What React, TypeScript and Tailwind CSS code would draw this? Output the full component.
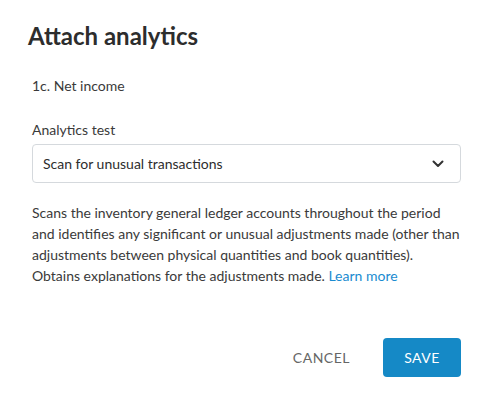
import React from "react";

export default function App() {
  return (
    <div className="w-[486px] h-[400px] bg-white" style={{ fontFamily: "Lato, 'Noto Sans', sans-serif" }}>
      <div className="pt-[20px] pl-[28px] pr-[25px]">
        <h1 className="text-[24px] leading-[32px] font-bold text-[#2d2d2d]">Attach analytics</h1>
        <div className="pl-[4px] mt-[24px] text-[14px] leading-[20px] text-[#3a3a3a]">1c. Net income</div>
        <div className="pl-[4px] mt-[24px] text-[14px] leading-[20px] text-[#3a3a3a]">Analytics test</div>
        <div className="ml-[4px] mt-[4px] h-[39px] border border-[#d5d9dd] rounded-[4px] flex items-center justify-between pl-[10px] pr-[16px] text-[14px] text-[#2d2d2d]">
          <span>Scan for unusual transactions</span>
          <svg width="12" height="8" viewBox="0 0 12 8" fill="none">
            <path d="M1.5 1.5 L6 6 L10.5 1.5" stroke="#333" strokeWidth="2" strokeLinecap="round" strokeLinejoin="round" />
          </svg>
        </div>
        <p className="pl-[4px] mt-[19px] text-[14px] leading-[21px] text-[#3a3a3a]">
          Scans the inventory general ledger accounts throughout the period and identifies any significant or unusual adjustments made (other than adjustments between physical quantities and book quantities). Obtains explanations for the adjustments made. <span className="text-[#1a8bd0]">Learn more</span>
        </p>
        <div className="flex justify-end items-center mt-[52px] gap-[33px]">
          <button className="text-[14px] tracking-[0.5px] text-[#666]">CANCEL</button>
          <button className="w-[78px] h-[39px] rounded-[4px] bg-[#1589c6] text-white text-[14px] tracking-[0.5px]">SAVE</button>
        </div>
      </div>
    </div>
  );
}
